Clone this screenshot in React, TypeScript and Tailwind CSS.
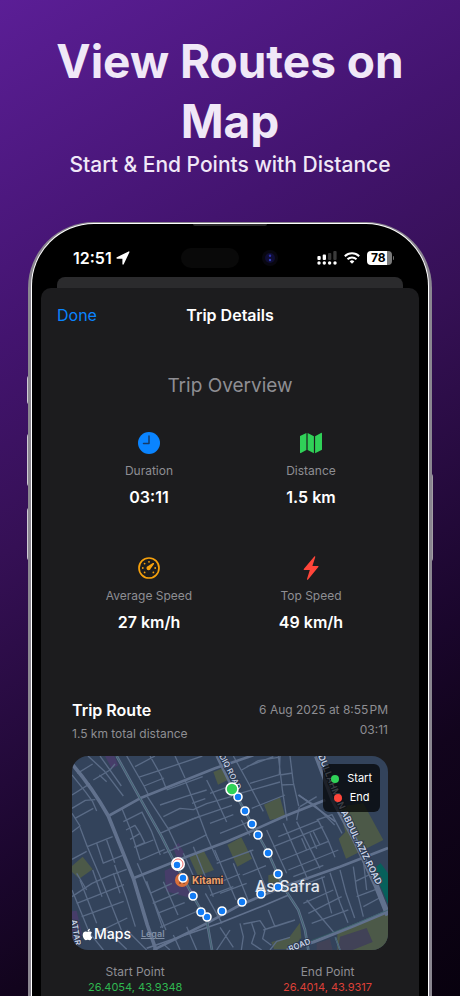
import type { ReactNode } from "react";
import { FaApple } from "react-icons/fa";

type Stat = {
  label: string;
  value: string;
  icon: ReactNode;
};

const stats: Stat[] = [
  { label: "Duration", value: "03:11", icon: <ClockIcon /> },
  { label: "Distance", value: "1.5 km", icon: <MapIcon /> },
  { label: "Average Speed", value: "27 km/h", icon: <GaugeIcon /> },
  { label: "Top Speed", value: "49 km/h", icon: <BoltIcon /> },
];

const routePoints = [
  [166, 41], [173, 55], [180, 68], [186, 79], [196, 97], [206, 118],
  [206, 131], [189, 138], [170, 146], [150, 155], [135, 161], [129, 156],
  [121, 140], [111, 122], [105, 109],
];

function ClockIcon() {
  return (
    <svg className="size-6" viewBox="0 0 24 24" aria-hidden="true">
      <circle cx="12" cy="12" r="11" fill="#0a84ff" />
      <path d="M12 5v7.5H6.5" fill="none" stroke="#173a66" strokeWidth="1.5" strokeLinecap="round" strokeLinejoin="round" />
    </svg>
  );
}

function MapIcon() {
  return (
    <svg className="size-6" viewBox="0 0 24 24" fill="#30d158" aria-hidden="true">
      <path d="M1 5.1 7.4 1.9v17.2l-5.500 3c-.5.3-.9 0-.9-.6Z" />
      <path d="M8.600 1.900l6.300 3.400v17L8.600 19.100Z" />
      <path d="M16.100 5.300l5.900-3.400c.5-.3 1 0 1 .6v16.200l-6.900 3.600Z" />
    </svg>
  );
}

function GaugeIcon() {
  return (
    <svg className="size-6" viewBox="0 0 24 24" fill="#f5a00c" aria-hidden="true">
      <circle cx="12" cy="12" r="10" fill="none" stroke="#f5a00c" strokeWidth="1.7" />
      <path d="M16.9 7.1c.4.4.2.8 0 1.1l-3.100 4.400a2.200 2.200 0 1 1-2.700-2.600l4.700-2.900c.4-.3.8-.3 1.100 0Z" />
      <circle cx="12" cy="5.8" r="0.9" />
      <circle cx="7.6" cy="7.6" r="0.9" />
      <circle cx="5.8" cy="12" r="0.9" />
      <circle cx="7.6" cy="16.4" r="0.9" />
      <circle cx="16.4" cy="16.4" r="0.9" />
      <circle cx="18.2" cy="12" r="0.9" />
    </svg>
  );
}

function BoltIcon() {
  return (
    <svg className="size-6" viewBox="0 0 24 24" fill="#ff453a" aria-hidden="true">
      <path d="M15.3.4 4.8 13c-.4.5-.1.9.4.9h5.6L8 22.900c-.3.9.5 1.200 1.100.5L19.300 10.900c.4-.5.1-.9-.4-.9h-5.500L16.300 1C16.500.2 15.800-.1 15.300.4Z" />
    </svg>
  );
}

function StatusBar() {
  return (
    <div className="flex h-[51px] items-center pl-8 pr-[25px] pt-3 text-white">
      <div className="flex w-[108px] items-center gap-1">
        <span className="text-base font-semibold">12:51</span>
        <svg className="size-[14px]" viewBox="0 0 14 14" fill="currentColor" aria-hidden="true">
          <path d="M.9 6.200 12.600.4c.6-.3 1.100.300.8.9L7.700 13.300c-.4.7-1.300.5-1.300-.3V7.700H1.200c-.9 0-1.100-1.100-.3-1.500Z" />
        </svg>
      </div>
      <div className="flex items-center gap-[23px]">
        <div className="h-5 w-[58px] rounded-full bg-[#090909]" />
        <svg className="size-4" viewBox="0 0 16 16" aria-hidden="true">
          <circle cx="8" cy="8" r="8" fill="#08070f" />
          <circle cx="8" cy="8" r="5" fill="#0f0d35" />
          <circle cx="8" cy="5.8" r="1.2" fill="#2b31a8" />
          <circle cx="8" cy="10" r="1.2" fill="#3440b8" />
        </svg>
      </div>
      <div className="ml-auto flex items-center gap-[7px]">
        <svg className="h-[14px] w-5" viewBox="0 0 20 14" fill="currentColor" aria-hidden="true">
          <circle cx="2" cy="12" r="1.7" />
          <circle cx="7.3" cy="12" r="1.7" />
          <circle cx="12.6" cy="12" r="1.7" />
          <circle cx="18" cy="12" r="1.7" />
          <rect x=".4" y="5" width="3.3" height="4" rx="1" />
          <rect x="5.7" y="3.5" width="3.3" height="5.5" rx="1" />
          <rect x="11" y="2" width="3.3" height="7" rx="1" fill="#3a3a3a" />
          <rect x="16.3" y="0" width="3.3" height="9" rx="1" fill="#3a3a3a" />
        </svg>
        <svg className="h-3 w-4" viewBox="0 0 16 12" fill="none" stroke="currentColor" strokeWidth="2" aria-hidden="true">
          <path d="M.8 4.300a10.300 10.300 0 0 1 14.400 0" />
          <path d="M3.500 7.200a6.500 6.500 0 0 1 9 0" />
          <path d="M8 11.800 5.700 9.400a3.300 3.300 0 0 1 4.600 0Z" fill="currentColor" stroke="none" />
        </svg>
        <div className="flex items-center gap-px">
          <div className="flex h-[14px] w-[25px] items-center rounded bg-[linear-gradient(90deg,#fff_78%,#7a7a7a_78%)] pl-1 text-xs font-bold text-black">
            78
          </div>
          <div className="h-1 w-px rounded-r bg-[#6a6a6a]" />
        </div>
      </div>
    </div>
  );
}

function Streets() {
  return (
    <g transform="scale(0.33333) translate(-156 -198)" fill="none" strokeLinejoin="round">
      <g fill="#4c5948">
        <path d="M580 246l30-12 18 34-34 16Z" />
        <path d="M156 528l32-28 30 38-40 28-22-20Z" />
        <path d="M508 502l44-18 30 56-48 18Z" />
        <path d="M622 464l42-22 32 64-44 24Z" />
        <path d="M732 344l48-22 16 58-46 10Z" />
        <path d="M955 350l75-10 60 110-112 56-22-60 20-20Z" />
        <path d="M745 556l28-8 8 26-36 8Z" />
        <path d="M754 756l54-14 32-44 4 46-30 34h-52Z" />
        <path d="M952 722l152-60v118H952Z" />
      </g>
      <g fill="#463d69">
        <path d="M255 198h28l12 28-20 10Z" />
        <path d="M460 474l16-16 16 30-16 30Z" />
        <path d="M434 542l30-14 20 40 44 40-24 14-66-18Z" />
        <path d="M156 664l14-2 16 70-8 30h-22Z" />
      </g>
      <path d="M960 740l80-26 18 42-60 24h-44ZM890 760l40-14 8 34h-48Z" fill="#414257" />
      <path d="M1060 538l22-18 22 30v92Z" fill="#06615b" />

      <g stroke="#5a6b86" strokeWidth="4">
        {/* west side blocks */}
        <path d="M204 198l48 44 58 76M172 250l46-28M220 270l50-30 15-18M238 255l22 20M156 255l40 50 22 30 12 28" />
        <path d="M156 315l54-34M156 355l40-24 30-2M165 385l55-30M156 370l24 38-24 18M240 198l64 90" />
        <path d="M180 412l22 58 76-30M202 470l40 94 62 156M156 508l44-24M230 460l20 60M260 450l24 68M248 520l66-26" />
        <path d="M156 620l60-40 54-24 50-18M180 570l50 130M170 640l52-20 90-36M185 680l126-46M284 525l34 95 28 90" />
        <path d="M156 600l48 118M226 730l96-46M200 600l-30-50M280 550l20 60M218 540l28 80" />
        <path d="M306 356l26 64 28 90M365 365l30 60 26 70M310 395l55-28M318 420l27-14 15 24M330 448l30-18 14 28-32 14M350 470l50-20M360 510l74-32" />
        <path d="M352 520l44 100 42 100M380 574l48 140M390 610l66-30M398 640l78-32M412 670l82-32M420 712l120-52M430 575l44 100" />
        {/* centre blocks */}
        <path d="M320 198l52 90 14 28M345 230l60-32M355 262l116-38 76-26M390 198l34 60 14 36M465 198l30 66M372 288l60-24" />
        <path d="M420 345l75-25 65-20M430 380l50-25 40 4 40-18 76-22M420 430l100-44 116-40M382 320l62 95 32 66M495 270l36 90 30 80 32 72" />
        <path d="M560 270l30 60 30 66M430 490l90-36 40-20M445 415l94-36M440 300l108-40M516 340l40-14M570 310l56-20" />
        <path d="M520 470l60 150M556 610l50 90M490 490l40 90M584 480l64 150M590 580l70-28M600 610l80-30M640 520l44 110" />
        <path d="M690 480l54 130M590 520l110-40M664 390l26 46M570 400l70-26M600 430l90-36M640 590l-70 26M668 555l70-28" />
        {/* north east blocks */}
        <path d="M640 198l50 90 40 76M665 240l50-28 60-10M690 280l88-26 2-56M680 230l80-30M775 198l12 100 14 94M810 198l10 80 16 70M780 255l38-6M784 285l36-2M660 310l120-34M695 355l100-40" />
        <path d="M834 315l50 30 60 60M840 350l50-30M838 350l-8 40" />
        <path d="M740 420l60 130M790 400l48 110 26 60M830 395l40 80 30 60M775 440l120-48 30 60 20 50M760 470l150-60M785 510l140-56M805 540l150-60M845 445l15 35M870 430l20 46M880 425l20 40M890 390l46-16 30 56" />
        <path d="M820 560l90-34M835 590l80-30M860 630l50 60 34 40M850 640l90-40M865 670l100-50M875 700l110-40M930 548l30 90 24 60M905 560l30 110M960 540l18 70 26 74M1000 530l10 70 20 80M1030 510l10 90M1005 575l45-22M1010 620l58-22M1030 650l48-26" />
        {/* southern edge */}
        <path d="M660 700l10 40-6 40M695 700l10 30-10 30 30 20M670 702l50-10 16 24-8 30 26 20M745 660l20 50 60-20M730 720l80-26M750 780l20-26 40-12M630 720l-40 60M600 712l40 60" />
        <path d="M460 735l20 44M500 710l30 70M430 762l20 18M320 720l60 60M260 720l60 58M210 730l40 50" />
      </g>

      <g stroke="#61718d" strokeWidth="8">
        <path d="M156 222q60 70 109 156l75 187 42 140 26 75" strokeWidth="11" />
        <path d="M265 378l95-53 120-48 105-42 115-39" />
        <path d="M340 565l160-65 120-45 70-30 100-45 126-50" />
        <path d="M400 780l160-80 100-55 130-55 170-60 144-56" />
        <path d="M380 775l220-76 130-52 76-32" strokeWidth="5" />
        <path d="M590 198l50 102 60 110 45 80 45 100 45 70 20 60 10 60" />
        <path d="M290 198l70 127 65 115 35 70 60 110 40 70 16 90" />
        <path d="M890 198l50 132 60 110 70 150 34 86" strokeWidth="16" />
        <path d="M800 780l80-24 120-48 104-44" strokeWidth="10" />
        <path d="M946 742l14 38M836 315l110 80" strokeWidth="5" />
      </g>
      <g stroke="#326064" strokeWidth="2">
        <path d="M290 198l70 127 65 115 35 70 60 110 40 70 16 90" />
        <path d="M640 300l60 110 45 80 45 100 45 70 20 60 10 60M820 772l180-68 104-44M946 742l14 38" />
      </g>
    </g>
  );
}

function RouteMap() {
  return (
    <div className="relative mt-[14px] overflow-hidden rounded-2xl bg-[#33435b]">
      <svg className="block w-full" viewBox="0 0 316 194" role="img" aria-label="Trip route map">
        <Streets />
        <defs>
          <path id="east-road" d="M246 0L265 48L284 88L312 144" />
          <path id="north-road" d="M147 0L156 17L168 42" />
          <path id="south-road" d="M218 196L250 183" />
          <path id="west-road" d="M-1 164L5 198" />
        </defs>
        <g fill="#c8d2e6" stroke="#2c394f" strokeWidth="2" paintOrder="stroke" fontSize="9" fontWeight="600">
          <text><textPath href="#east-road">DULLAHMAN ABDUL AZIZ ROAD</textPath></text>
          <text fontSize="8" fontWeight="500"><textPath href="#north-road">DIQ ROAD</textPath></text>
          <text fontSize="8"><textPath href="#south-road">ROAD</textPath></text>
          <text fontSize="8"><textPath href="#west-road">ATTAR</textPath></text>
        </g>
        <circle cx="110" cy="124" r="7" fill="#d9703a" />
        <path d="M108 120v8M112 120v8" stroke="#5a2b18" strokeWidth="1" />
        <text x="120" y="128" fontSize="10" fontWeight="700" fill="#f0a168" stroke="#2a2b38" strokeWidth="2" paintOrder="stroke">
          Kitami
        </text>
        <text x="183" y="136" fontSize="16" fontWeight="500" fill="#e4e8ef" stroke="#3a4a62" strokeWidth="1" paintOrder="stroke">
          As Safra
        </text>
        <circle cx="106" cy="108" r="7" fill="#fff" />
        <circle cx="106" cy="108" r="5" fill="none" stroke="#f06a66" strokeWidth="1" />
        {routePoints.map(([x, y]) => (
          <circle key={`${x}-${y}`} cx={x} cy={y} r="4" fill="#127cf5" stroke="#fff" strokeWidth="1.6" />
        ))}
        <circle cx="160" cy="33" r="6" fill="#30d158" stroke="#fff" strokeWidth="1.6" />
      </svg>

      <div className="absolute right-2 top-2 flex flex-col items-center gap-1 rounded-md bg-black/70 px-2 py-[7px] text-[11px] leading-[15px] text-white">
        <div className="flex items-center gap-2">
          <span className="size-2 rounded-full bg-[#30d158]" />
          Start
        </div>
        <div className="flex items-center gap-2">
          <span className="size-2 rounded-full bg-[#ff453a]" />
          End
        </div>
      </div>

      <div className="absolute bottom-1 left-[9px] flex items-center gap-[10px]">
        <span className="flex items-center text-sm leading-6 font-medium text-white">
          <FaApple className="size-[13px]" aria-hidden="true" />
          Maps
        </span>
        <a href="#legal" className="text-[9px] font-semibold text-[#8290a5] underline">
          Legal
        </a>
      </div>
    </div>
  );
}

function TripSheet() {
  return (
    <main className="flex-1 rounded-t-[10px] bg-[#1c1c1e]">
      <header className="grid h-[54px] grid-cols-3 items-center px-4">
        <button type="button" className="justify-self-start text-base text-[#0a84ff]">
          Done
        </button>
        <h2 className="justify-self-center text-base font-semibold whitespace-nowrap text-white">Trip Details</h2>
      </header>

      <section>
        <h3 className="mt-[30px] text-center text-[19px] leading-7 text-[#8e8e93]">Trip Overview</h3>
        <dl className="mx-[27px] mt-[31px] grid grid-cols-2 gap-y-[47px]">
          {stats.map((stat) => (
            <div key={stat.label} className="flex flex-col items-center text-center">
              {stat.icon}
              <dt className="mt-2 text-xs leading-4 text-[#8e8e93]">{stat.label}</dt>
              <dd className="mt-[6px] text-base font-semibold text-white">{stat.value}</dd>
            </div>
          ))}
        </dl>
      </section>

      <section className="mx-[31px] mt-[64px]">
        <div className="flex justify-between">
          <div>
            <h3 className="text-base font-semibold text-white">Trip Route</h3>
            <p className="mt-1 text-xs leading-4 text-[#8e8e93]">1.5 km total distance</p>
          </div>
          <div className="pt-1 text-right text-xs leading-4 text-[#8e8e93]">
            <p>6 Aug 2025 at 8:55{"\u200a"}PM</p>
            <p className="mt-1">03:11</p>
          </div>
        </div>
        <RouteMap />
        <div className="mt-[14px] flex justify-between px-4 text-center text-[11px] leading-[15px]">
          <div>
            <p className="text-xs leading-4 text-[#8e8e93]">Start Point</p>
            <p className="text-[#30b750]">26.4054, 43.9348</p>
          </div>
          <div>
            <p className="text-xs leading-4 text-[#8e8e93]">End Point</p>
            <p className="text-[#dc4038]">26.4014, 43.9317</p>
          </div>
        </div>
      </section>
    </main>
  );
}

function Phone() {
  return (
    <div className="relative mx-7 mt-[43px] flex flex-1 flex-col">
      {/* side buttons */}
      <div className="absolute -left-px top-[153px] h-[30px] w-1 rounded-l bg-[#cfcbd4]" />
      <div className="absolute -left-px top-[211px] h-[54px] w-1 rounded-l bg-[#cfcbd4]" />
      <div className="absolute -left-px top-[285px] h-[54px] w-1 rounded-l bg-[#cfcbd4]" />
      <div className="absolute -right-px top-[251px] h-[89px] w-1 rounded-r bg-[#a39ea5]" />

      <div className="relative flex flex-1 flex-col rounded-t-[66px] bg-[#8a8690] px-[3px] pt-px">
        <div className="flex flex-1 flex-col rounded-t-[63px] bg-white px-px pt-px">
          <div className="flex flex-1 flex-col rounded-t-[62px] bg-black px-[9px]">
            <div className="mx-auto h-[2px] w-[74px] rounded-b bg-[#2b2b2b]" />
            <StatusBar />
            <div className="mx-4 h-[11px] rounded-t-lg bg-[#2b2b2d]" />
            <TripSheet />
          </div>
        </div>
      </div>
    </div>
  );
}

function App() {
  return (
    <div className="flex h-screen flex-col overflow-hidden bg-[linear-gradient(150deg,#5b1e96_0%,#43146f_27%,#351055_44%,#1a062c_70%,#12041d_79%,#08010e_100%)] font-['Inter',sans-serif]">
      <div className="px-8 pt-[31px] text-center text-[#f0e8f7]">
        <h1 className="text-[46px] leading-[60px] font-bold">View Routes on Map</h1>
        <p className="text-[21px] leading-7 font-medium">Start &amp; End Points with Distance</p>
      </div>
      <Phone />
    </div>
  );
}

export default App;
